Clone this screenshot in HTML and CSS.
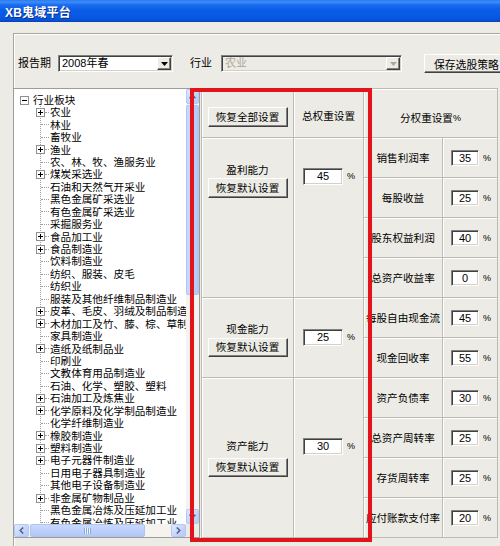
FILE: index.html
```html
<!DOCTYPE html>
<html lang="zh-CN">
<head>
<meta charset="utf-8">
<title>XB鬼域平台</title>
<link rel="stylesheet" href="styles.css">
</head>
<body>
<div class="titlebar"><span class="title">XB鬼域平台</span></div>
<div class="client">
  <div class="panel">
    <div class="toolbar">
      <span class="lbl lbl-period">报告期</span>
      <div class="combo combo-period"><span class="combo-text">2008年春</span><span class="drop"><svg width="7" height="4" viewBox="0 0 7 4"><path d="M0 0h7L3.5 4z" fill="#000"/></svg></span></div>
      <span class="lbl lbl-ind">行业</span>
      <div class="combo combo-ind disabled"><span class="combo-text">农业</span><span class="drop"><svg width="7" height="4" viewBox="0 0 7 4"><path d="M0 0h7L3.5 4z" fill="#aca899"/></svg></span></div>
      <button class="btn btn-save">保存选股策略</button>
    </div>
    <div class="work">
      <div class="tree">
        <div class="tree-view">
          <div class="node root"><span class="tg minus"></span><span class="tx">行业板块</span></div>
          <div class="children">
            <div class="node"><span class="tg plus"></span><span class="stub"></span><span class="tx">农业</span></div>
            <div class="node"><span class="stub long"></span><span class="tx">林业</span></div>
            <div class="node"><span class="stub long"></span><span class="tx">畜牧业</span></div>
            <div class="node"><span class="tg plus"></span><span class="stub"></span><span class="tx">渔业</span></div>
            <div class="node"><span class="stub long"></span><span class="tx">农、林、牧、渔服务业</span></div>
            <div class="node"><span class="tg plus"></span><span class="stub"></span><span class="tx">煤炭采选业</span></div>
            <div class="node"><span class="stub long"></span><span class="tx">石油和天然气开采业</span></div>
            <div class="node"><span class="stub long"></span><span class="tx">黑色金属矿采选业</span></div>
            <div class="node"><span class="stub long"></span><span class="tx">有色金属矿采选业</span></div>
            <div class="node"><span class="stub long"></span><span class="tx">采掘服务业</span></div>
            <div class="node"><span class="tg plus"></span><span class="stub"></span><span class="tx">食品加工业</span></div>
            <div class="node"><span class="tg plus"></span><span class="stub"></span><span class="tx">食品制造业</span></div>
            <div class="node"><span class="stub long"></span><span class="tx">饮料制造业</span></div>
            <div class="node"><span class="stub long"></span><span class="tx">纺织、服装、皮毛</span></div>
            <div class="node"><span class="stub long"></span><span class="tx">纺织业</span></div>
            <div class="node"><span class="stub long"></span><span class="tx">服装及其他纤维制品制造业</span></div>
            <div class="node"><span class="tg plus"></span><span class="stub"></span><span class="tx">皮革、毛皮、羽绒及制品制造业</span></div>
            <div class="node"><span class="tg plus"></span><span class="stub"></span><span class="tx">木材加工及竹、藤、棕、草制品业</span></div>
            <div class="node"><span class="stub long"></span><span class="tx">家具制造业</span></div>
            <div class="node"><span class="tg plus"></span><span class="stub"></span><span class="tx">造纸及纸制品业</span></div>
            <div class="node"><span class="stub long"></span><span class="tx">印刷业</span></div>
            <div class="node"><span class="stub long"></span><span class="tx">文教体育用品制造业</span></div>
            <div class="node"><span class="stub long"></span><span class="tx">石油、化学、塑胶、塑料</span></div>
            <div class="node"><span class="tg plus"></span><span class="stub"></span><span class="tx">石油加工及炼焦业</span></div>
            <div class="node"><span class="tg plus"></span><span class="stub"></span><span class="tx">化学原料及化学制品制造业</span></div>
            <div class="node"><span class="stub long"></span><span class="tx">化学纤维制造业</span></div>
            <div class="node"><span class="tg plus"></span><span class="stub"></span><span class="tx">橡胶制造业</span></div>
            <div class="node"><span class="tg plus"></span><span class="stub"></span><span class="tx">塑料制造业</span></div>
            <div class="node"><span class="tg plus"></span><span class="stub"></span><span class="tx">电子元器件制造业</span></div>
            <div class="node"><span class="stub long"></span><span class="tx">日用电子器具制造业</span></div>
            <div class="node"><span class="stub long"></span><span class="tx">其他电子设备制造业</span></div>
            <div class="node"><span class="tg plus"></span><span class="stub"></span><span class="tx">非金属矿物制品业</span></div>
            <div class="node"><span class="stub long"></span><span class="tx">黑色金属冶炼及压延加工业</span></div>
            <div class="node"><span class="stub long"></span><span class="tx">有色金属冶炼及压延加工业</span></div>
          </div>
        </div>
        <div class="vscroll">
          <span class="sb-btn sb-v"><svg width="7" height="5" viewBox="0 0 7 5"><path d="M0.5 4.2L3.5 1.2L6.5 4.2" fill="none" stroke="#4d6185" stroke-width="1.5"/></svg></span>
          <span class="sb-thumb vthumb"></span>
          <span class="sb-space"></span>
          <span class="sb-btn sb-v"><svg width="7" height="5" viewBox="0 0 7 5"><path d="M0.5 0.8L3.5 3.8L6.5 0.8" fill="none" stroke="#4d6185" stroke-width="1.5"/></svg></span>
        </div>
        <div class="hscroll">
          <span class="sb-btn sb-h"><svg width="5" height="7" viewBox="0 0 5 7"><path d="M4.2 0.5L1.2 3.5L4.2 6.5" fill="none" stroke="#4d6185" stroke-width="1.5"/></svg></span>
          <span class="sb-thumb hthumb"><span class="grip"></span></span>
          <span class="sb-space"></span>
          <span class="sb-btn sb-h"><svg width="5" height="7" viewBox="0 0 5 7"><path d="M0.8 0.5L3.8 3.5L0.8 6.5" fill="none" stroke="#4d6185" stroke-width="1.5"/></svg></span>
        </div>
        <div class="corner"></div>
      </div>

      <div class="grid">
        <div class="cell h1"><button class="btn btn-grid">恢复全部设置</button></div>
        <div class="cell h2">总权重设置</div>
        <div class="cell h3">分权重设置<span class="pct">%</span></div>

        <div class="cell gname n1"><span class="gtitle">盈利能力</span><button class="btn btn-grid">恢复默认设置</button></div>
        <div class="cell gtot t1"><span class="tbox">45</span><span class="pct pct-t">%</span></div>
        <div class="cell gname n2"><span class="gtitle">现金能力</span><button class="btn btn-grid">恢复默认设置</button></div>
        <div class="cell gtot t2"><span class="tbox">25</span><span class="pct pct-t">%</span></div>
        <div class="cell gname n3"><span class="gtitle">资产能力</span><button class="btn btn-grid">恢复默认设置</button></div>
        <div class="cell gtot t3"><span class="tbox">30</span><span class="pct pct-t">%</span></div>

        <div class="cell sl r2">销售利润率</div><div class="cell sv r2"><span class="tbox sbox">35</span><span class="pct">%</span></div>
        <div class="cell sl r3">每股收益</div><div class="cell sv r3"><span class="tbox sbox">25</span><span class="pct">%</span></div>
        <div class="cell sl r4">股东权益利润</div><div class="cell sv r4"><span class="tbox sbox">40</span><span class="pct">%</span></div>
        <div class="cell sl r5">总资产收益率</div><div class="cell sv r5"><span class="tbox sbox">0</span><span class="pct">%</span></div>
        <div class="cell sl r6">每股自由现金流</div><div class="cell sv r6"><span class="tbox sbox">45</span><span class="pct">%</span></div>
        <div class="cell sl r7">现金回收率</div><div class="cell sv r7"><span class="tbox sbox">55</span><span class="pct">%</span></div>
        <div class="cell sl r8">资产负债率</div><div class="cell sv r8"><span class="tbox sbox">30</span><span class="pct">%</span></div>
        <div class="cell sl r9">总资产周转率</div><div class="cell sv r9"><span class="tbox sbox">25</span><span class="pct">%</span></div>
        <div class="cell sl r10">存货周转率</div><div class="cell sv r10"><span class="tbox sbox">25</span><span class="pct">%</span></div>
        <div class="cell sl r11">应付账款支付率</div><div class="cell sv r11"><span class="tbox sbox">20</span><span class="pct">%</span></div>
      </div>

      <div class="redbox"></div>
    </div>
  </div>
</div>
</body>
</html>
```

FILE: styles.css
```css
* { box-sizing: border-box; }
html, body {
  margin: 0;
  padding: 0;
  width: 500px;
  height: 546px;
  overflow: hidden;
}
body {
  background: #ecebe5;
  font-family: "Liberation Sans", "Noto Sans CJK SC", sans-serif;
  font-size: 10.6px;
  color: #000;
}

/* title bar */
.titlebar {
  height: 22px;
  display: flex;
  align-items: center;
  padding-left: 5px;
  background: linear-gradient(to bottom, #2c7cf0 0%, #3b8cfb 10%, #1a6cf0 22%, #0a5de6 45%, #0857e2 80%, #0650d6 92%, #0a3fae 100%);
}
.title {
  color: #fff;
  font-weight: bold;
  font-size: 12px;
  letter-spacing: 0.2px;
  text-shadow: 1px 1px 0 #0b2f8a;
}

/* client area */
.client { padding: 11px 0 0 13px; }
.panel {
  border-top: 1px solid #aca899;
  border-left: 1px solid #aca899;
  box-shadow: inset 1px 1px 0 #fff;
  height: 513px;
}

/* toolbar */
.toolbar {
  display: flex;
  align-items: center;
  height: 19px;
  margin-top: 20px;
  padding-left: 4px;
}
.toolbar > * { flex-shrink: 0; }
.lbl { font-size: 11px; line-height: 19px; }
.lbl-ind { margin-left: 17px; }
.combo {
  display: flex;
  align-items: center;
  height: 17px;
  background: #fff;
  border: 1px solid;
  border-color: #808080 #fff #fff #808080;
  box-shadow: inset 1px 1px 0 #404040, inset -1px -1px 0 #d4d0c8;
  padding: 1px;
}
.combo-period { margin-left: 7px; width: 115px; }
.combo-ind { margin-left: 9px; width: 181px; }
.combo.disabled { background: #ecebe5; }
.combo-text {
  flex: 1;
  padding-left: 2px;
  font-size: 11px;
  line-height: 13px;
  white-space: nowrap;
}
.disabled .combo-text { color: #aca899; }
.drop {
  width: 14px;
  height: 13px;
  display: flex;
  align-items: center;
  justify-content: center;
  background: #ecebe5;
  border: 1px solid;
  border-color: #fff #404040 #404040 #fff;
  box-shadow: inset -1px -1px 0 #808080;
}

/* buttons */
.btn {
  font-family: inherit;
  font-size: 10.6px;
  color: #000;
  background: #ecebe5;
  border: 1px solid;
  border-color: #fff #404040 #404040 #fff;
  box-shadow: inset -1px -1px 0 #808080;
  padding: 0;
  margin: 0;
  white-space: nowrap;
}
.btn-save {
  margin-left: 22px;
  width: 86px;
  height: 19px;
  text-align: left;
  padding-left: 9px;
  font-size: 10.8px;
}
.btn-grid {
  width: 80px;
  height: 20px;
  line-height: 17px;
}

/* work area */
.work {
  position: relative;
  display: flex;
  align-items: flex-start;
  margin-top: 15px;
  margin-left: -1px;
  height: 450px;
}

/* tree */
.tree {
  width: 187px;
  height: 450px;
  border: 1px solid #9c9c9c;
  display: grid;
  grid-template-columns: 1fr 13px;
  grid-template-rows: 1fr 13px;
  background: #fff;
}
.tree-view {
  overflow: hidden;
  background: #fff;
  padding: 4.8px 0 0 6px;
  white-space: nowrap;
}
.node {
  display: flex;
  align-items: center;
  height: 12.45px;
  line-height: 12.45px;
}
.tx { font-size: 10.6px; }
.root .tg { margin-right: 4px; }
.children {
  margin-left: 20px;
  border-left: 1px dotted #a0a0a0;
}
.children .node { margin-left: -5px; }
.children .tx { margin-left: 1px; }
.tg {
  flex-shrink: 0;
  width: 9px;
  height: 9px;
  border: 1px solid #8f8f8f;
  background-color: #fff;
}
.tg.plus {
  background:
    linear-gradient(#000, #000) center / 5px 1px no-repeat,
    linear-gradient(#000, #000) center / 1px 5px no-repeat,
    #fff;
}
.tg.minus {
  background:
    linear-gradient(#000, #000) center / 5px 1px no-repeat,
    #fff;
}
.stub {
  flex-shrink: 0;
  width: 4px;
  height: 0;
  border-top: 1px dotted #a0a0a0;
}
.stub.long { width: 8px; margin-left: 5px; }

/* XP scrollbars */
.vscroll {
  display: flex;
  flex-direction: column;
  background: #f4f3ee;
}
.hscroll {
  display: flex;
  background: #f4f3ee;
}
.corner { background: #ecebe5; }
.sb-btn {
  display: flex;
  align-items: center;
  justify-content: center;
  flex-shrink: 0;
  background: linear-gradient(135deg, #e0e9fe 0%, #c3d3fb 60%, #b7caf6 100%);
  border: 1px solid #b4c8f3;
  border-radius: 2px;
}
.sb-v { height: 15px; }
.sb-h { width: 15px; }
.sb-thumb {
  flex-shrink: 0;
  background: linear-gradient(90deg, #cbd9fc 0%, #bcd0fa 50%, #b3c7f5 100%);
  border: 1px solid #aec3f1;
  border-radius: 2px;
}
.vthumb { height: 190px; margin-top: 1px; }
.hthumb {
  width: 115px;
  margin-left: 1px;
  display: flex;
  align-items: center;
  justify-content: center;
  background: linear-gradient(180deg, #cbd9fc 0%, #bcd0fa 50%, #b3c7f5 100%);
}
.grip {
  width: 7px;
  height: 6px;
  background: repeating-linear-gradient(90deg, #8ea6db 0 1px, #eef3fe 1px 2px);
}
.sb-space { flex: 1; }

/* grid */
.grid {
  margin-left: 1px;
  display: grid;
  grid-template-columns: 92px 70px 79px 55px;
  grid-template-rows: 49px repeat(10, 40px);
  border-left: 1px solid #bdbbb2;
  border-top: 1px solid #bdbbb2;
  height: 450px;
}
.cell {
  border-right: 1px solid #bdbbb2;
  border-bottom: 1px solid #bdbbb2;
  box-shadow: inset 1px 1px 0 #fff;
  white-space: nowrap;
}
.h1 {
  grid-column: 1;
  grid-row: 1;
  display: flex;
  justify-content: center;
  padding-top: 18px;
}
.h2 {
  grid-column: 2;
  grid-row: 1;
  display: flex;
  align-items: center;
  justify-content: center;
  padding-top: 5px;
}
.h3 {
  grid-column: 3 / 5;
  grid-row: 1;
  display: flex;
  align-items: center;
  justify-content: center;
  padding-top: 9px;
}
.gname {
  grid-column: 1;
  display: flex;
  flex-direction: column;
  align-items: center;
}
.gtitle { line-height: 14px; }
.gtot {
  grid-column: 2;
  display: flex;
  align-items: flex-start;
  padding-left: 9px;
}
.n1 { grid-row: 2 / 6; padding-top: 25px; }
.n1 .btn-grid { margin-top: 1px; }
.t1 { grid-row: 2 / 6; padding-top: 30px; }
.n2 { grid-row: 6 / 8; padding-top: 24px; }
.n2 .btn-grid { margin-top: 2px; height: 19px; }
.t2 { grid-row: 6 / 8; padding-top: 31px; }
.n3 { grid-row: 8 / 12; padding-top: 61px; }
.n3 .btn-grid { margin-top: 5px; height: 19px; }
.t3 { grid-row: 8 / 12; padding-top: 60px; }

.sl {
  grid-column: 3;
  display: flex;
  align-items: center;
  justify-content: center;
}
.sv {
  grid-column: 4;
  display: flex;
  align-items: center;
  padding-left: 8px;
}
.r2 { grid-row: 2; }
.r3 { grid-row: 3; }
.r4 { grid-row: 4; }
.r5 { grid-row: 5; }
.r6 { grid-row: 6; }
.r7 { grid-row: 7; }
.r8 { grid-row: 8; }
.r9 { grid-row: 9; }
.r10 { grid-row: 10; }
.r11 { grid-row: 11; }

.tbox {
  display: block;
  width: 40px;
  height: 17px;
  background: #fff;
  border: 1px solid;
  border-color: #808080 #fff #fff #808080;
  box-shadow: inset 1px 1px 0 #404040, inset -1px -1px 0 #d4d0c8;
  font-size: 11px;
  line-height: 15px;
  text-align: center;
}
.sbox { width: 28px; height: 16px; line-height: 14px; }
.pct {
  font-family: "Liberation Sans", sans-serif;
  font-size: 9px;
  margin-left: 4px;
}
.pct-t { line-height: 17px; }
.h3 .pct { margin-left: 0; }

/* red annotation overlay */
.redbox {
  position: absolute;
  left: 177px;
  top: 0;
  width: 182px;
  height: 454px;
  border: 4px solid #e3131b;
  pointer-events: none;
}
```
